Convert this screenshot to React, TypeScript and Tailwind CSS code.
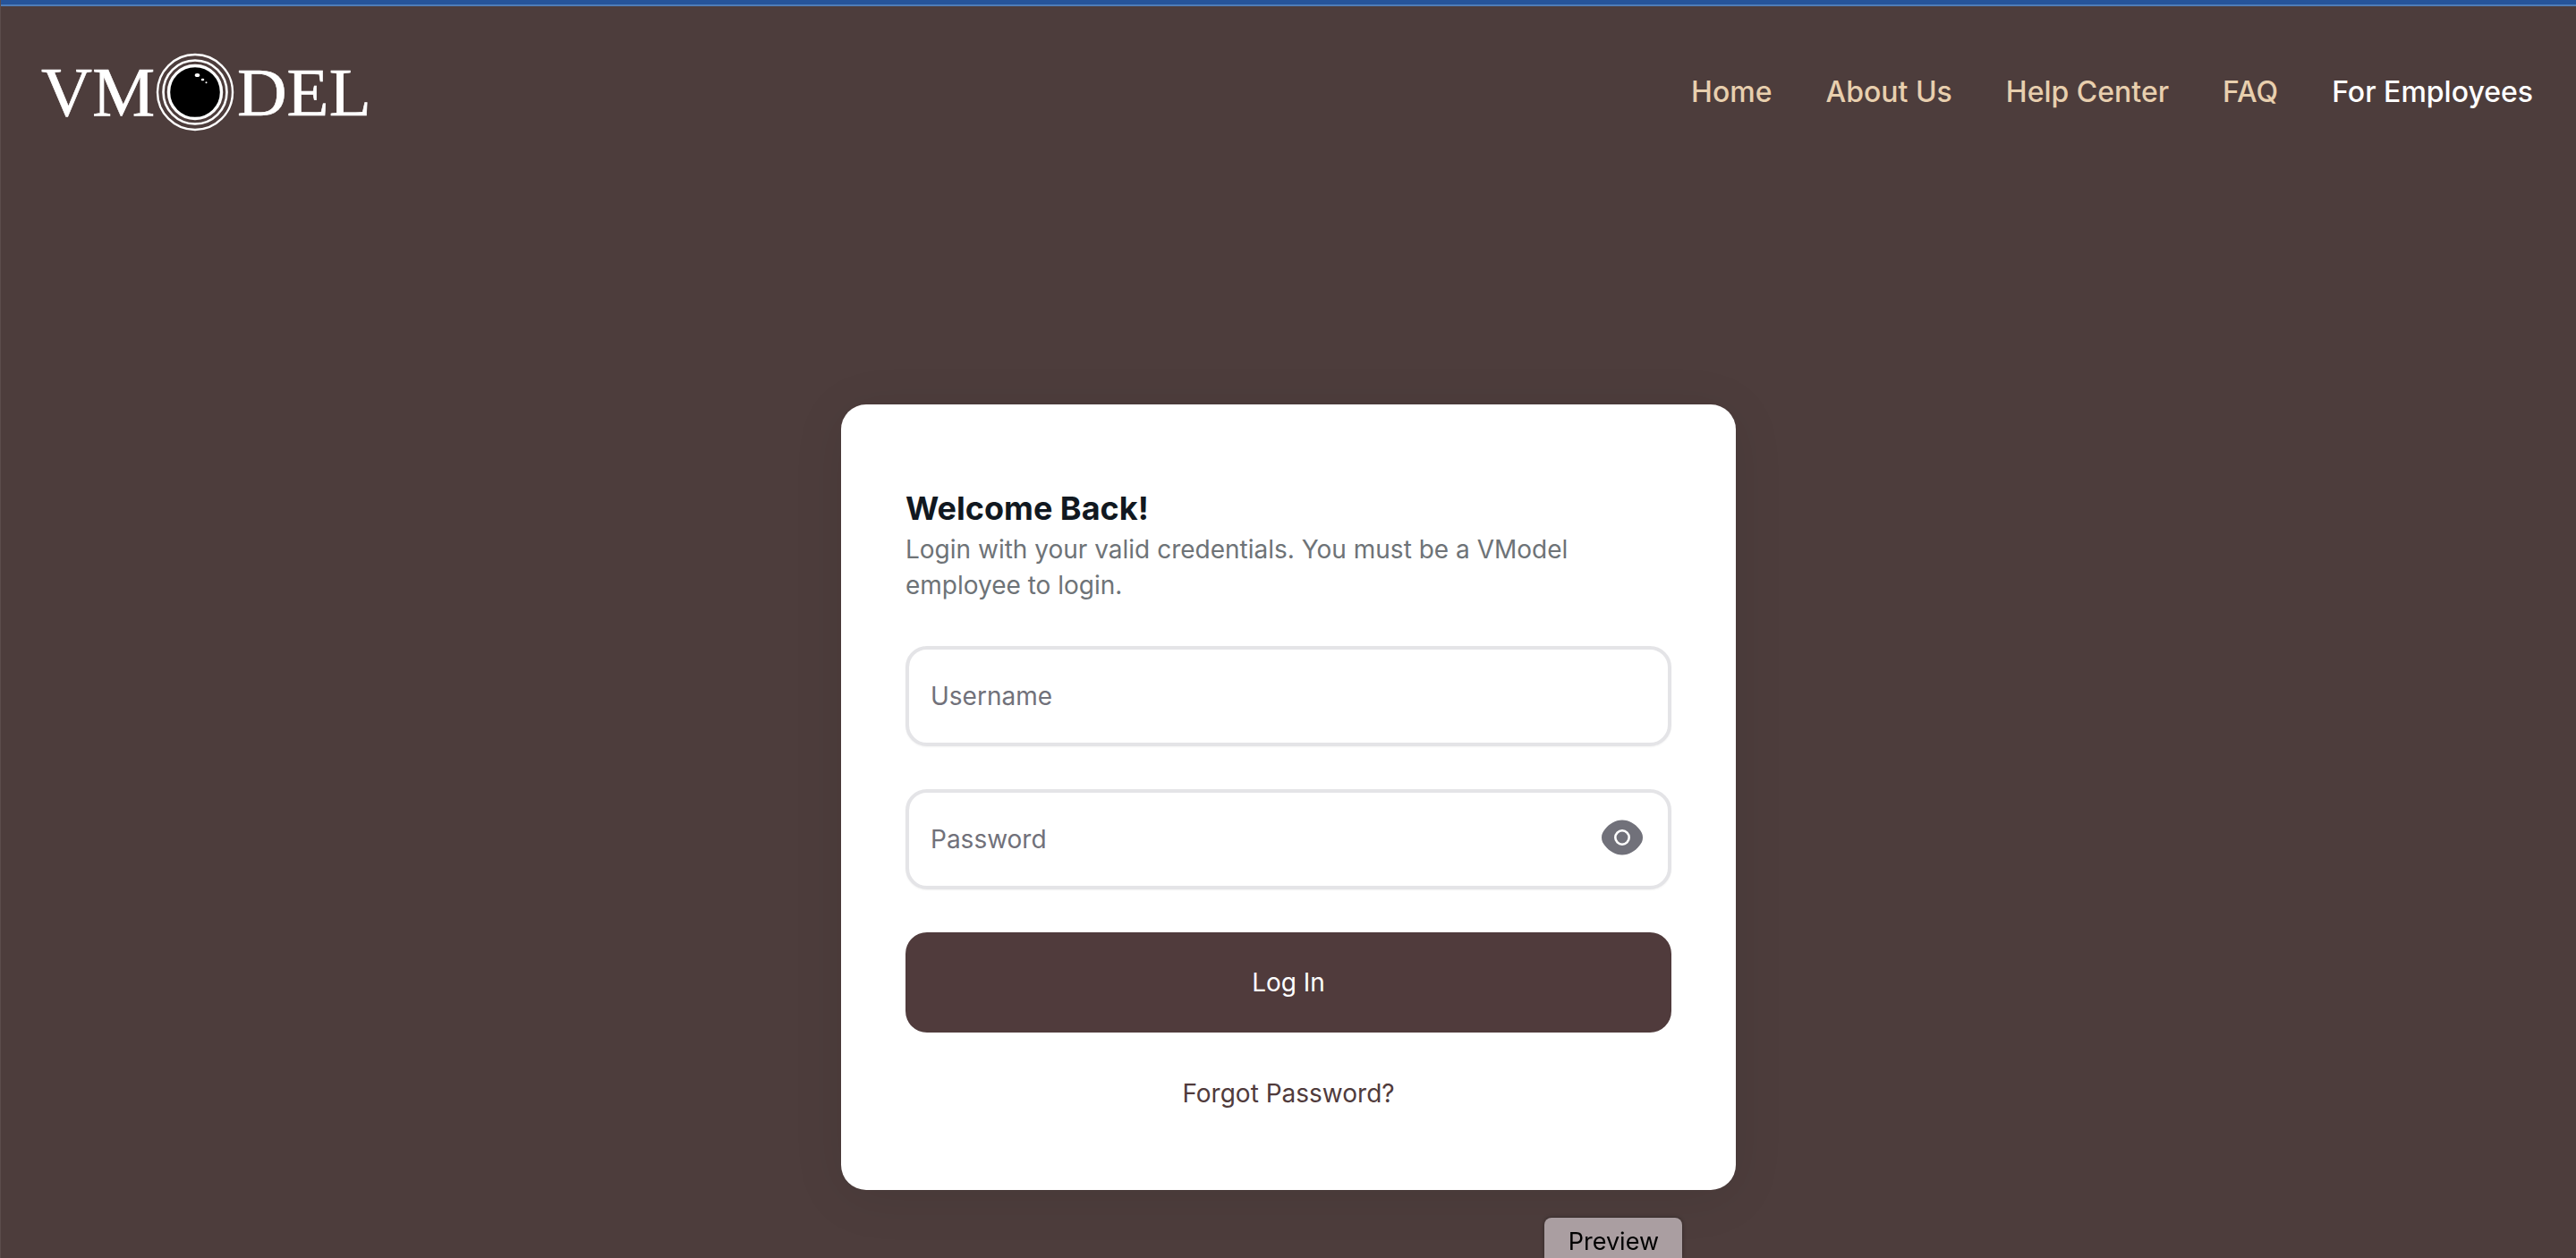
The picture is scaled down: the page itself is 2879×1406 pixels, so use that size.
import { useState } from "react";

const links = ["Home", "About Us", "Help Center", "FAQ"];

function Logo() {
  return (
    <a href="#home" aria-label="VModel" className="block">
      <svg width="370" height="88" viewBox="0 0 370 88" fill="none">
        <g fill="#fff" stroke="#fff" strokeWidth="0.6" fontFamily="'Liberation Serif', serif" fontSize="79">
          <text x="0" y="70">VM</text>
          <text x="219" y="70" fontSize="77">DEL</text>
        </g>
        <circle cx="172" cy="44" r="42" stroke="#fff" strokeWidth="2.4" />
        <circle cx="172" cy="44" r="35.5" stroke="#fff" strokeWidth="2.6" />
        <circle cx="172" cy="44" r="29.5" fill="#000" stroke="#fff" strokeWidth="3.4" />
        <ellipse cx="174.5" cy="25" rx="2.8" ry="2" fill="#fff" />
        <ellipse cx="180.5" cy="30" rx="1.8" ry="1.2" fill="#fff" />
        <circle cx="184.5" cy="33.3" r="1" fill="#fff" />
      </svg>
    </a>
  );
}

function EyeIcon() {
  return (
    <svg width="46" height="40" viewBox="0 0 46 40">
      <path
        d="M0 20C0 16 1.500 13.500 4 10.500C8.500 5 15 .5 23 .5S37.500 5 42 10.500C44.500 13.500 46 16 46 20S44.500 26.500 42 29.500C37.500 35 31 39.500 23 39.500S8.500 35 4 29.500C1.500 26.500 0 24 0 20Z"
        fill="#71717a"
      />
      <circle cx="23" cy="20" r="7.7" fill="none" stroke="#fff" strokeWidth="2.6" />
    </svg>
  );
}

const field =
  "h-28 w-full rounded-3xl border-4 border-[#e4e4e7] bg-white px-6 text-[28px] leading-10 text-[#111820] shadow-xs outline-none placeholder:text-[#71717a] placeholder:opacity-100";

export default function App() {
  const [visible, setVisible] = useState(false);
  return (
    <div className="flex h-screen flex-col overflow-hidden border-l border-[#5b4c4b] bg-[#4d3d3c] font-['Inter',sans-serif]">
      <div className="h-[7px] shrink-0 border-b-2 border-[#4f7db8] bg-[#265499]" />
      <header className="flex h-48 shrink-0 items-center justify-between pr-12 pl-[45px]">
        <Logo />
        <nav className="flex items-center gap-[60px] text-[32px] leading-10 font-medium text-[#e8cfae]">
          {links.map((l) => (
            <a key={l} href="#nav">
              {l}
            </a>
          ))}
          <a href="#employees" className="text-white">
            For Employees
          </a>
        </nav>
      </header>
      <main className="flex flex-1 flex-col items-center pt-[253px]">
        <form
          onSubmit={(e) => e.preventDefault()}
          className="flex w-full max-w-[1000px] shrink-0 flex-col rounded-[28px] bg-white px-[72px] pt-[92px] pb-[88px] shadow-[0_8px_60px_rgba(0,0,0,0.08)]"
        >
          <h1 className="mb-0.5 text-[36px] leading-[48px] font-bold text-[#111820]">Welcome Back!</h1>
          <p className="text-[28px] leading-10 text-[#6e7377]">
            Login with your valid credentials. You must be a VModel employee to login.
          </p>
          <div className="mt-12 flex flex-col gap-12">
            <input aria-label="Username" placeholder="Username" className={field} />
            <div className="relative">
              <input
                aria-label="Password"
                type={visible ? "text" : "password"}
                placeholder="Password"
                className={field}
              />
              <button
                type="button"
                aria-label="Show password"
                onClick={() => setVisible(!visible)}
                className="absolute top-[34px] right-8"
              >
                <EyeIcon />
              </button>
            </div>
            <button type="submit" className="h-28 rounded-3xl bg-[#503b3c] text-[28px] leading-10 text-white">
              Log In
            </button>
          </div>
          <a href="#forgot" className="mt-12 self-center text-[28px] leading-10 text-[#503b3c]">
            Forgot Password?
          </a>
        </form>
      </main>
      <div className="fixed bottom-0 left-[60%] ml-[-1px] flex h-[45px] w-[154px] items-center justify-center rounded-t-lg bg-[#aa9ea1] pt-2 text-[27px] leading-9 text-black shadow-[0_0_4px_rgba(0,0,0,0.4)]">
        Preview
      </div>
    </div>
  );
}
